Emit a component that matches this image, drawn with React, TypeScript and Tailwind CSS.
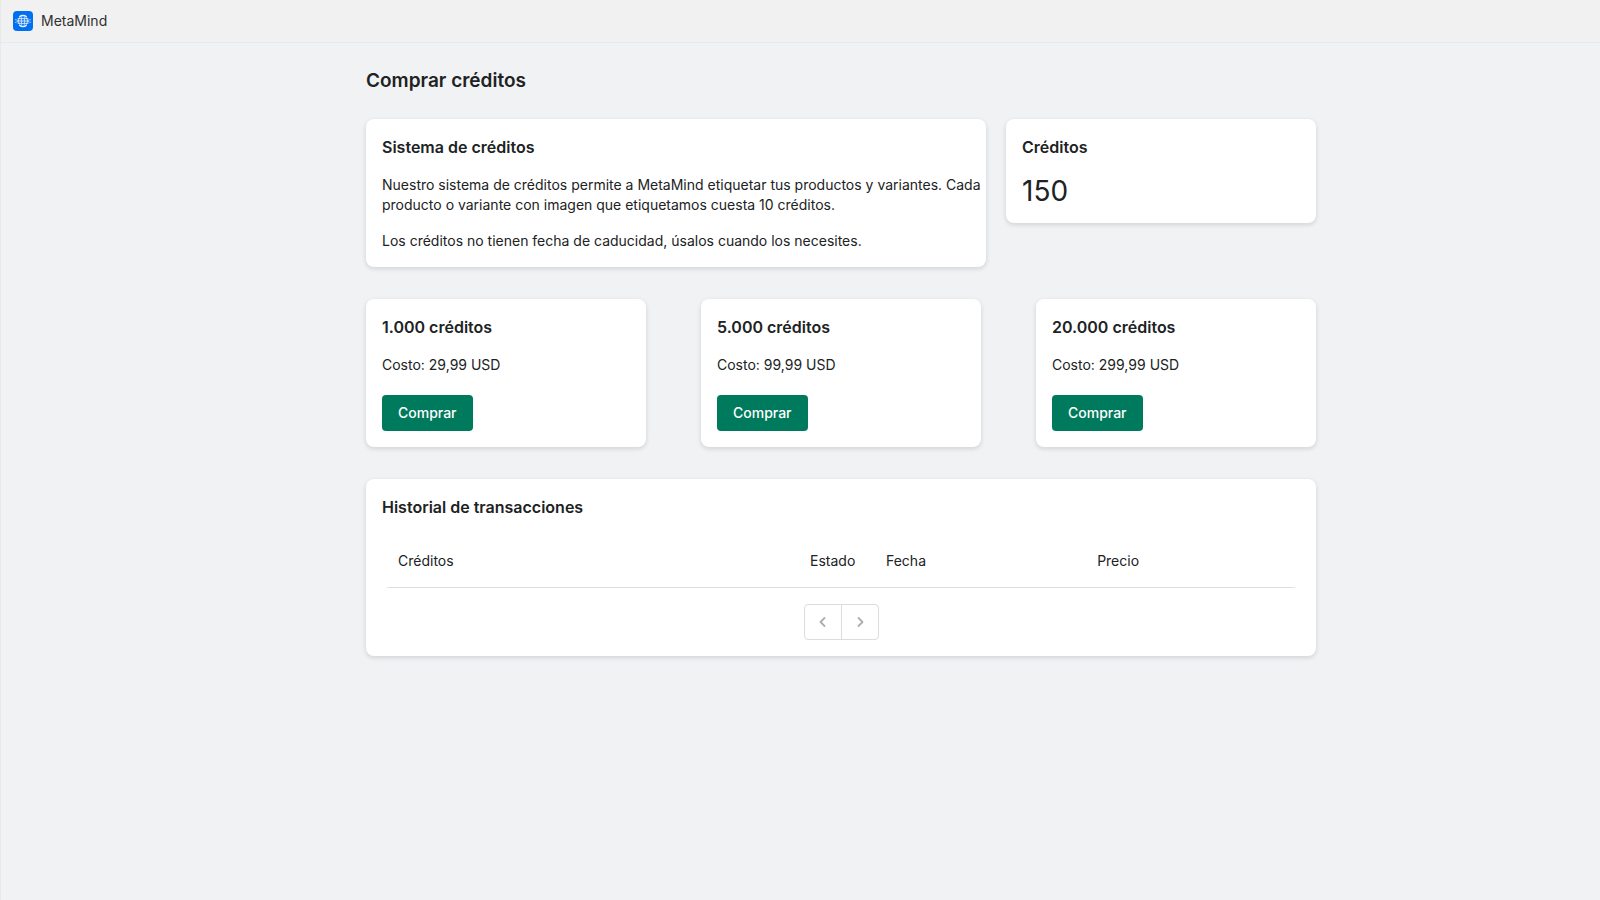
import type { ReactNode } from 'react';

const plans = [
  { credits: '1.000', cost: '29,99' },
  { credits: '5.000', cost: '99,99' },
  { credits: '20.000', cost: '299,99' },
];

function Card({ title, className = '', children }: { title: string; className?: string; children: ReactNode }) {
  return (
    <section
      className={`rounded-lg bg-white p-4 shadow-[0_2px_4px_rgba(31,33,36,0.1),0_1px_6px_rgba(31,33,36,0.05)] ${className}`}
    >
      <h2 className="mb-4 text-base font-semibold">{title}</h2>
      {children}
    </section>
  );
}

function Logo() {
  return (
    <svg className="size-5" viewBox="0 0 20 20" fill="none" aria-hidden="true">
      <rect width="20" height="20" rx="4" fill="#0070f0" />
      <g stroke="#fff" strokeLinecap="round">
        <path strokeWidth="1.4" strokeOpacity="0.9" d="M6.8 5.500C7.700 4.700 8.800 4.400 10 4.400s2.300.3 3.200 1.100M6.800 14.500c.9.8 2 1.100 3.200 1.100s2.300-.3 3.200-1.100" />
        <path strokeWidth="0.9" strokeOpacity="0.9" d="M5 7.700h10M5 12.300h10M4.600 10h10.800" />
        <path strokeWidth="0.8" strokeOpacity="0.7" d="M2.300 8.600l2.700.7M2.300 11.400l2.700-.7M17.700 8.600l-2.700.7M17.700 11.400l-2.700-.7" />
        <path strokeWidth="0.8" strokeOpacity="0.8" d="M7.800 5C6.700 6.500 5.500 8.200 5.500 10s1.200 3.500 2.300 5M12.200 5c1.100 1.500 2.300 3.200 2.300 5s-1.200 3.500-2.300 5M9 5c-.9 3.300-.9 6.700 0 10M11 5c.9 3.300.9 6.700 0 10" />
      </g>
    </svg>
  );
}

function Chevron({ direction }: { direction: 'left' | 'right' }) {
  return (
    <svg className="size-5" viewBox="0 0 20 20" fill="none" stroke="#a9afb6" strokeWidth="1.800" strokeLinecap="round" strokeLinejoin="round" aria-hidden="true">
      <path d={direction === 'left' ? 'M11.500 6l-4 4 4 4' : 'M8.500 6l4 4-4 4'} />
    </svg>
  );
}

export default function App() {
  return (
    <div className="min-h-screen border-l border-[#e8e9eb] bg-[#f1f2f4] font-['Inter',sans-serif] text-sm text-[#202223]">
      <header className="flex h-[43px] items-center gap-2 border-b border-[#e8e9eb] bg-[#f1f1f1] px-3 text-[#303030]">
        <Logo />
        <span>MetaMind</span>
      </header>

      <main className="pt-6 pb-8 lg:pl-[81px]">
        <div className="mx-auto flex max-w-[998px] flex-col gap-8 px-6">
          <div>
            <h1 className="mb-6 text-[19px] leading-7 font-semibold">Comprar créditos</h1>
            <div className="grid items-start gap-5 md:grid-cols-[2fr_1fr]">
              <Card title="Sistema de créditos">
                <p className="mb-4 -mr-3">
                  Nuestro sistema de créditos permite a MetaMind etiquetar tus productos y variantes. Cada producto o
                  variante con imagen que etiquetamos cuesta 10 créditos.
                </p>
                <p>Los créditos no tienen fecha de caducidad, úsalos cuando los necesites.</p>
              </Card>
              <Card title="Créditos">
                <p className="text-[28px] leading-8">150</p>
              </Card>
            </div>
          </div>

          <div className="flex flex-wrap justify-between gap-5">
            {plans.map((plan) => (
              <Card key={plan.credits} title={`${plan.credits} créditos`} className="w-70">
                <p className="mb-5">Costo: {plan.cost} USD</p>
                <button type="button" className="h-9 rounded bg-[#007a5c] px-4 font-medium text-white">
                  Comprar
                </button>
              </Card>
            ))}
          </div>

          <Card title="Historial de transacciones">
            <div className="mb-4 overflow-hidden rounded-lg">
              <table className="w-full table-fixed border-separate border-spacing-0 text-left">
                <thead>
                  <tr>
                    <th scope="col" className="w-[412px] border-b border-[#dcdee0] p-4 font-normal">Créditos</th>
                    <th scope="col" className="w-[76px] border-b border-[#dcdee0] py-4 pl-4 font-normal">Estado</th>
                    <th scope="col" className="w-[23%] border-b border-[#dcdee0] p-4 font-normal">Fecha</th>
                    <th scope="col" className="border-b border-[#dcdee0] p-4 font-normal">Precio</th>
                  </tr>
                </thead>
              </table>
            </div>
            <nav className="flex justify-center" aria-label="Paginación">
              <button
                type="button"
                disabled
                aria-label="Anterior"
                className="flex h-9 w-[38px] items-center justify-center rounded-l border border-[#d9dce0]"
              >
                <Chevron direction="left" />
              </button>
              <button
                type="button"
                disabled
                aria-label="Siguiente"
                className="-ml-px flex h-9 w-[38px] items-center justify-center rounded-r border border-[#d9dce0]"
              >
                <Chevron direction="right" />
              </button>
            </nav>
          </Card>
        </div>
      </main>
    </div>
  );
}
